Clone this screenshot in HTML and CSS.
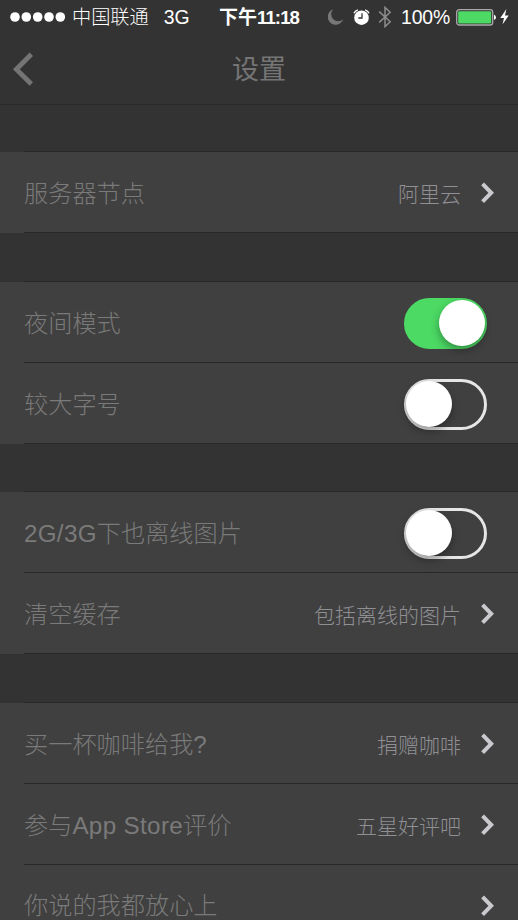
FILE: index.html
```
<!DOCTYPE html>
<html lang="zh-CN">
<head>
<meta charset="utf-8">
<title>设置</title>
<link rel="stylesheet" href="styles.css">
</head>
<body>
<svg width="0" height="0" class="defs">
  <symbol id="chevron" viewBox="0 0 14 22"><path d="M1.6 1.9 10.2 10.8 1.6 19.7" fill="none" stroke="currentColor" stroke-width="4"/></symbol>
</svg>
<header class="header">
  <div class="status">
    <div class="carrier">
      <svg class="signal" width="56" height="10" viewBox="0 0 56 10" fill="#fff"><circle cx="5" cy="5" r="4.8"/><circle cx="16.3" cy="5" r="4.8"/><circle cx="27.7" cy="5" r="4.8"/><circle cx="39" cy="5" r="4.8"/><circle cx="50.3" cy="5" r="4.8"/></svg>
      <span class="operator">中国联通</span>
      <span class="network">3G</span>
    </div>
    <span class="time">下午<span class="clock">11:18</span></span>
    <div class="indicators">
      <svg class="moon" width="16" height="16" viewBox="0 0 16 16"><path d="M5.2.4A7.9 7.9 0 1 0 15.2 10.2 6.9 6.9 0 0 1 5.2.4Z" fill="#777"/></svg>
      <svg class="alarm" width="17" height="17" viewBox="0 0 17 17"><circle cx="8.5" cy="8.7" r="7.3" fill="#fff"/><path d="M1 4.3Q2 1.8 4.8.9M16 4.3Q15 1.8 12.2.9" fill="none" stroke="#fff" stroke-width="1.4"/><path d="M9 4.2V9H5.3" fill="none" stroke="#333" stroke-width="1.3"/></svg>
      <svg class="bluetooth" width="14" height="22" viewBox="0 0 14 22"><path d="M1.2 5.6 12.2 15.8 7 20.6V1.4L12.2 6.2 1.2 16.4" fill="none" stroke="#8c8c8c" stroke-width="1.5"/></svg>
      <span class="percent">100%</span>
      <svg class="battery" width="41" height="17" viewBox="0 0 41 17"><rect x=".7" y=".7" width="36" height="15.3" rx="2.6" fill="#333" stroke="#aaa" stroke-width="1.3"/><rect x="2.2" y="2.2" width="33" height="12.3" rx="1.2" fill="#4cd964"/><path d="M38 5.8Q40 6.5 40 8.4T38 11Z" fill="#fff"/></svg>
      <svg class="bolt" width="9" height="16" viewBox="0 0 9 16"><path d="M6.4 0 .3 9H4L2.5 15.6 8.7 6.5H5Z" fill="#fff"/></svg>
    </div>
  </div>
  <nav class="navbar">
    <svg class="back" width="22" height="34" viewBox="0 0 22 34"><path d="M19.3 2.2 4.3 17.3 19.3 32" fill="none" stroke="#747474" stroke-width="4.8"/></svg>
    <h1 class="title">设置</h1>
  </nav>
</header>
<main class="settings">
  <section class="group">
    <div class="row"><span class="label">服务器节点</span><span class="value">阿里云</span><svg class="chevron"><use href="#chevron"/></svg></div>
  </section>
  <section class="group">
    <div class="row"><span class="label">夜间模式</span><span class="switch on"><span class="knob"></span></span></div>
    <div class="row"><span class="label">较大字号</span><span class="switch"><span class="knob"></span></span></div>
  </section>
  <section class="group">
    <div class="row"><span class="label"><span class="nets">2G/3G</span>下也离线图片</span><span class="switch"><span class="knob"></span></span></div>
    <div class="row"><span class="label">清空缓存</span><span class="value">包括离线的图片</span><svg class="chevron"><use href="#chevron"/></svg></div>
  </section>
  <section class="group">
    <div class="row"><span class="label">买一杯咖啡给我?</span><span class="value">捐赠咖啡</span><svg class="chevron"><use href="#chevron"/></svg></div>
    <div class="row"><span class="label">参与<span class="store">App Store</span>评价</span><span class="value">五星好评吧</span><svg class="chevron"><use href="#chevron"/></svg></div>
    <div class="row last"><span class="label">你说的我都放心上</span><svg class="chevron"><use href="#chevron"/></svg></div>
  </section>
</main>
</body>
</html>
```
FILE: styles.css
```
* { box-sizing: border-box; }
html { overflow: hidden; }
body {
  margin: 0;
  width: 518px;
  height: 920px;
  overflow: hidden;
  background: #333;
  font-family: "Liberation Sans", "Noto Sans CJK SC", sans-serif;
  font-weight: 300;
}
svg { display: block; flex: none; }
.defs { position: absolute; }
.header {
  height: 105px;
  border-bottom: 1px solid #292929;
}
.status {
  display: grid;
  grid-template-columns: 219px 1fr 190px;
  height: 33px;
  align-items: center;
  color: #fff;
  font-size: 19.4px;
  line-height: 33px;
  white-space: nowrap;
}
.carrier, .indicators { display: flex; align-items: center; height: 33px; }
.carrier { padding-left: 10px; }
.operator { margin-left: 6px; padding-top: 1px; font-size: 19.2px; }
.network { margin-left: 15px; padding-top: 1px; }
.time { padding-top: 1px; font-size: 19px; font-weight: 700; }
.clock { font-size: 18.6px; letter-spacing: -0.9px; }
.alarm { margin-left: 9px; }
.bluetooth { margin-left: 8px; }
.percent { margin-left: 9px; padding-top: 1px; width: 51px; font-size: 19.4px; letter-spacing: -0.1px; }
.battery { margin-left: 4px; }
.bolt { margin-left: 3px; }
.navbar {
  display: grid;
  grid-template-columns: 60px 1fr 60px;
  align-items: center;
  height: 71px;
}
.back { margin-left: 12px; }
.title {
  margin: 0;
  padding-top: 3px;
  text-align: center;
  color: #757575;
  font-size: 27px;
  font-weight: 400;
  line-height: 40px;
}
.settings { height: 815px; padding-top: 46px; overflow: hidden; }
.group {
  margin-bottom: 48px;
  padding-top: 1px;
  background: linear-gradient(#282828, #282828) 24px 0 / 100% 1px no-repeat, linear-gradient(#333, #333) 0 0 / 100% 1px no-repeat, #404040;
}
.group:nth-child(2) { margin-bottom: 47px; }
.group:last-child { margin-bottom: 0; }
.row {
  display: flex;
  align-items: center;
  height: 81px;
  padding: 1px 23px 0 24px;
  background: linear-gradient(#282828, #282828) 24px 100% / 100% 1px no-repeat;
  white-space: nowrap;
}
.row.last { height: 55px; align-items: flex-start; background: none; }
.label {
  flex: 1;
  padding-top: 1px;
  color: #7a7a7a;
  font-size: 24.2px;
  line-height: 36px;
}
.last .label { margin-top: 21px; }
.nets { letter-spacing: 0.3px; }
.store { letter-spacing: 0.35px; }
.value {
  color: #8f8f94;
  font-size: 21px;
  line-height: 32px;
  padding-top: 3px;
}
.chevron {
  width: 14px;
  height: 22px;
  margin-left: 20px;
  color: #cacace;
}
.last .chevron { margin-top: 29px; }
.switch {
  position: relative;
  width: 83px;
  height: 51px;
  margin-right: 8px;
  border: 3px solid #e6e6e6;
  border-radius: 26px;
}
.knob {
  position: absolute;
  top: -1px;
  left: -1px;
  width: 46px;
  height: 46px;
  border-radius: 50%;
  background: #fff;
  box-shadow: 0 4px 9px rgba(0, 0, 0, .35);
}
.on { background: #4cd964; border-color: #4cd964; }
.on .knob { left: 32px; }
```
